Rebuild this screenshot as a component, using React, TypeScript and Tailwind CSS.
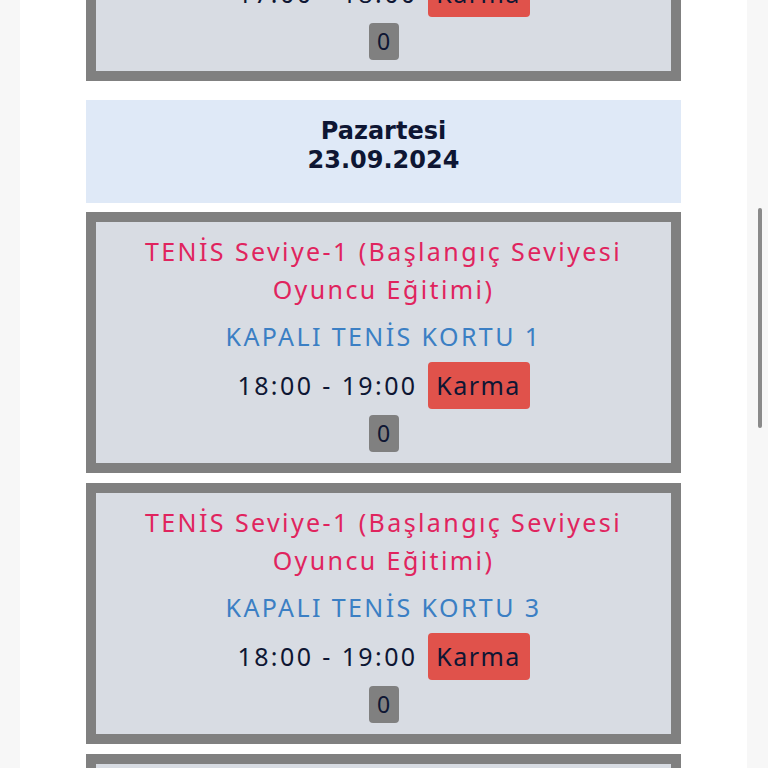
import React from "react";

type Session = {
  title: string;
  court: string;
  start: string;
  end: string;
  kind: string;
  count: number;
};

const first: Session = {
  title: "TENİS Seviye-1 (Başlangıç Seviyesi Oyuncu Eğitimi)",
  court: "KAPALI TENİS KORTU 2",
  start: "17:00",
  end: "18:00",
  kind: "Karma",
  count: 0,
};

const monday: Session[] = [
  {
    title: "TENİS Seviye-1 (Başlangıç Seviyesi Oyuncu Eğitimi)",
    court: "KAPALI TENİS KORTU 1",
    start: "18:00",
    end: "19:00",
    kind: "Karma",
    count: 0,
  },
  {
    title: "TENİS Seviye-1 (Başlangıç Seviyesi Oyuncu Eğitimi)",
    court: "KAPALI TENİS KORTU 3",
    start: "18:00",
    end: "19:00",
    kind: "Karma",
    count: 0,
  },
  {
    title: "TENİS Seviye-1 (Başlangıç Seviyesi Oyuncu Eğitimi)",
    court: "KAPALI TENİS KORTU 2",
    start: "19:00",
    end: "20:00",
    kind: "Karma",
    count: 0,
  },
];

function SessionCard({ s, className = "" }: { s: Session; className?: string }) {
  return (
    <div className={`shrink-0 border-[10px] border-[#808080] bg-[#d8dce3] ${className}`}>
      <div className="flex flex-col items-center pt-[10px] pb-[11px] text-center tracking-[2.4px]">
        <p className="px-[30px] text-[25px] leading-[38px] text-[#e0245e]">{s.title}</p>
        <p className="mt-[9px] text-[25px] leading-[38px] text-[#3b7fc4]">{s.court}</p>
        <div className="mt-[7px] flex h-[47px] items-center justify-center gap-[10px]">
          <span className="text-[25px] text-[#0e1633]">
            {s.start} - {s.end}
          </span>
          <span className="flex h-[47px] w-[102px] items-center justify-center rounded-[4px] bg-[#e0524b] text-[25px] tracking-[1.5px] text-[#0e1633]">
            {s.kind}
          </span>
        </div>
        <span className="mt-[6px] flex h-[37px] w-[30px] items-center justify-center rounded-[4px] bg-[#808080] text-[23px] tracking-normal text-[#0e1633]">
          {s.count}
        </span>
      </div>
    </div>
  );
}

export default function App() {
  return (
    <div
      className="relative h-[768px] overflow-hidden bg-[#f7f7f7]"
      style={{ fontFamily: "'Noto Sans', sans-serif" }}
    >
      <div className="ml-[20px] flex h-full w-[727px] flex-col bg-white px-[66px]">
        <div className="-mt-[180px] flex shrink-0 flex-col">
          <SessionCard s={first} />
          <div
            className="mt-[19px] bg-[#dfe9f7] pt-[17px] pb-[28px] text-center text-[24px] font-bold leading-[29px] text-[#0e1633]"
            style={{ fontFamily: "'DejaVu Sans', sans-serif" }}
          >
            <div>Pazartesi</div>
            <div>23.09.2024</div>
          </div>
          {monday.map((s, i) => (
            <SessionCard key={i} s={s} className={i === 0 ? "mt-[9px]" : "mt-[10px]"} />
          ))}
        </div>
      </div>
      <div className="absolute right-[6px] top-[208px] h-[220px] w-[4px] rounded-full bg-[#8a8a8a]" />
    </div>
  );
}
